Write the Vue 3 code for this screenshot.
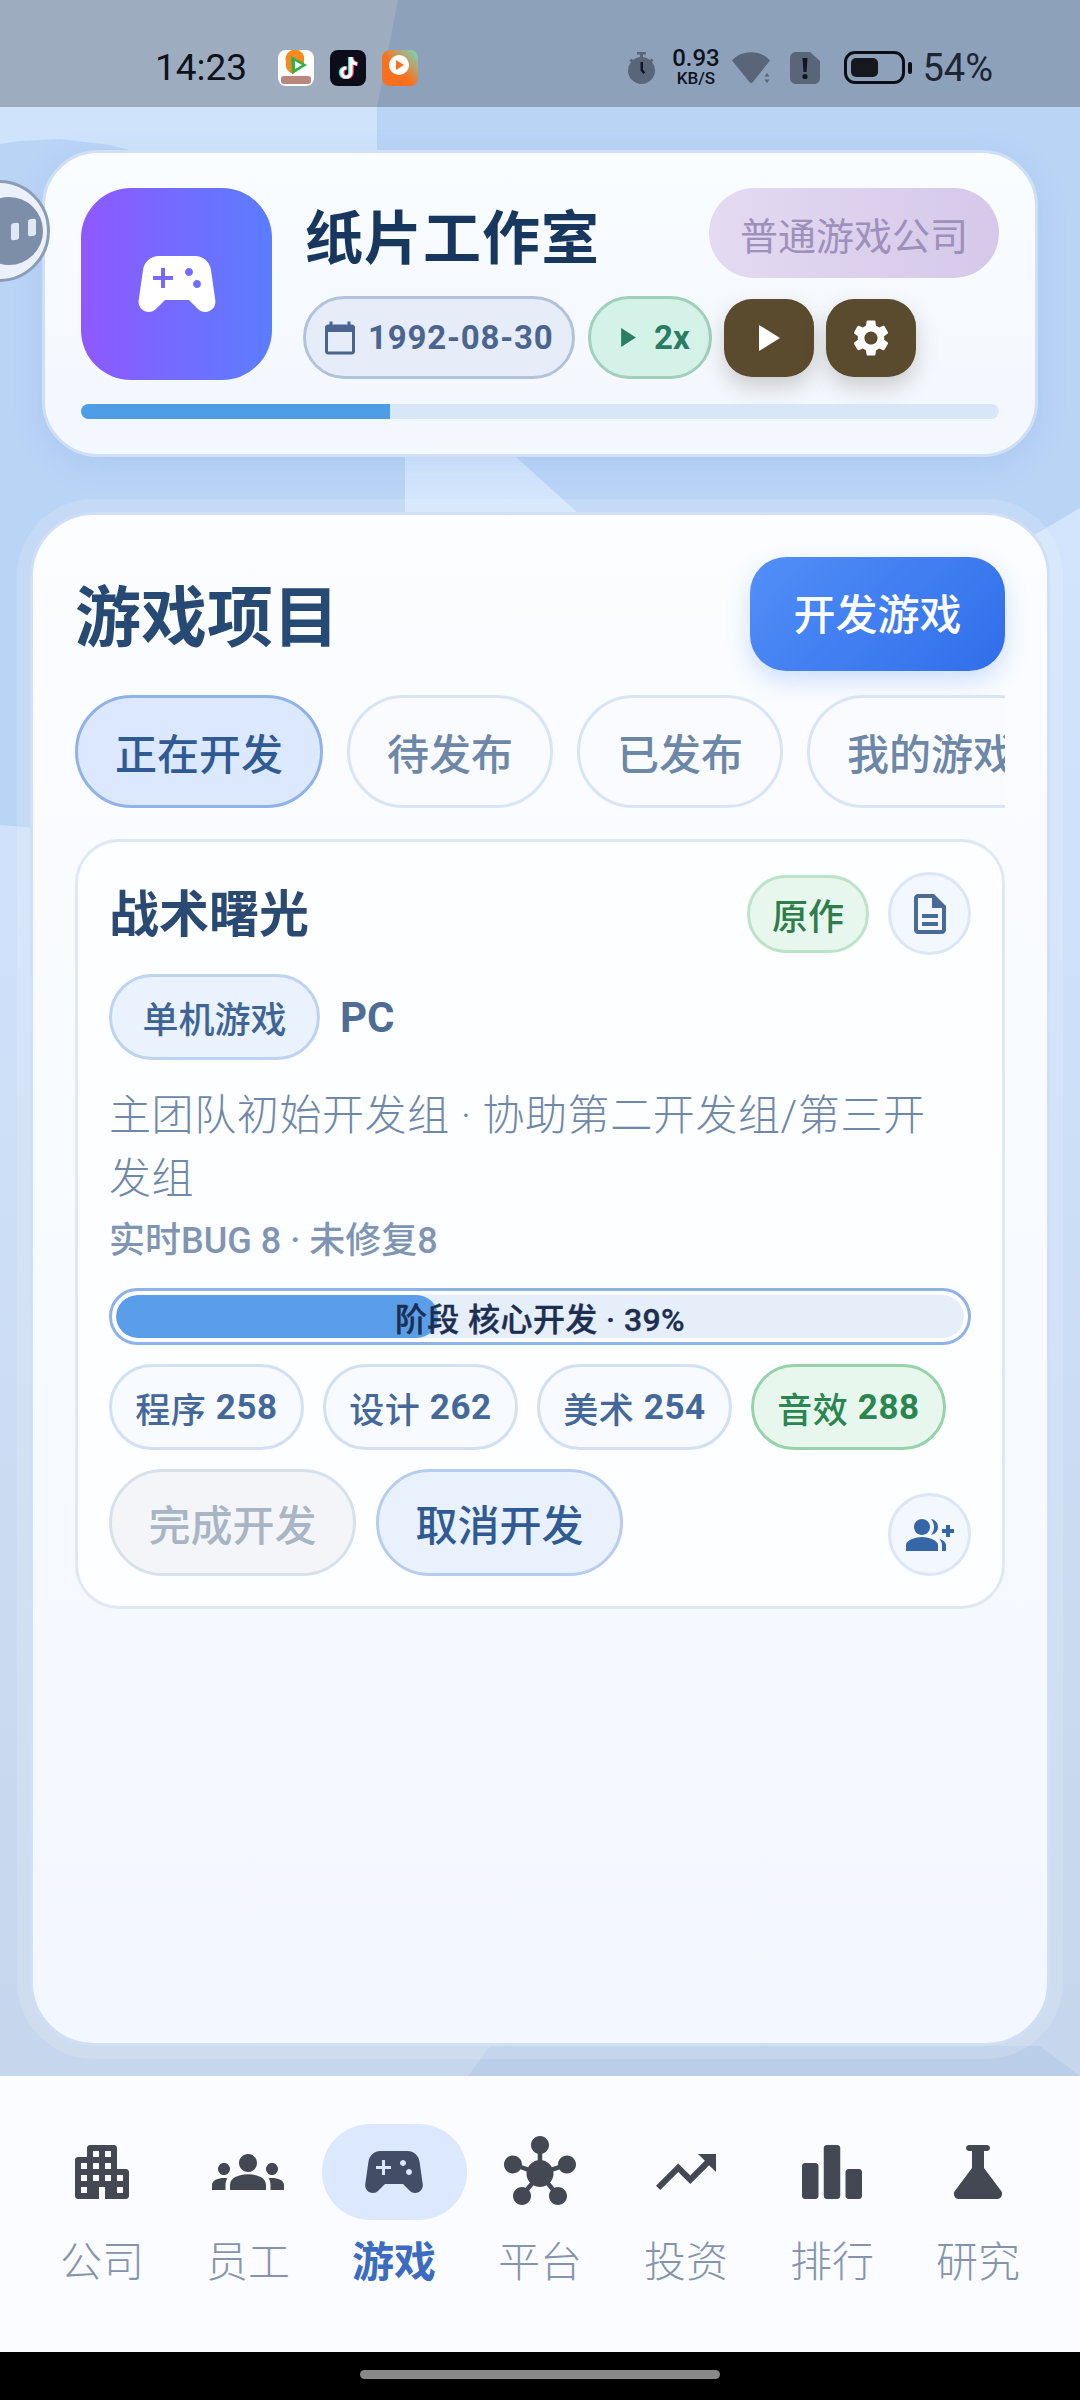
<script setup>
const tabs = ['待发布', '已发布', '我的游戏']
const skills = [
  { name: '程序', value: 258 },
  { name: '设计', value: 262 },
  { name: '美术', value: 254 },
  { name: '音效', value: 288, hot: true }
]
const gamepad = 'M21.58 16.09l-1.09-7.66C20.21 6.46 18.52 5 16.53 5H7.47C5.48 5 3.79 6.46 3.51 8.43l-1.09 7.66C2.2 17.63 3.39 19 4.94 19c.68 0 1.32-.27 1.8-.75L9 16h6l2.25 2.25c.48.48 1.13.75 1.8.75 1.56 0 2.75-1.37 2.53-2.91zM11 11H9v2H8v-2H6v-1h2V8h1v2h2v1zm4-1c-.55 0-1-.45-1-1s.45-1 1-1 1 .45 1 1-.45 1-1 1zm2 3c-.55 0-1-.45-1-1s.45-1 1-1 1 .45 1 1-.45 1-1 1z'
const nav = [
  { label: '公司', d: 'M17 11V4c0-.55-.45-1-1-1H8c-.55 0-1 .45-1 1v3H4c-.55 0-1 .45-1 1v12c0 .55.45 1 1 1h7v-4h2v4h7c.55 0 1-.45 1-1v-8c0-.55-.45-1-1-1h-3zM7 19H5v-2h2v2zm0-4H5v-2h2v2zm0-4H5V9h2v2zm4 4H9v-2h2v2zm0-4H9V9h2v2zm0-4H9V5h2v2zm4 8h-2v-2h2v2zm0-4h-2V9h2v2zm0-4h-2V5h2v2zm4 12h-2v-2h2v2zm0-4h-2v-2h2v2z' },
  { label: '员工', d: 'M12 12.75c1.63 0 3.07.39 4.24.9 1.08.48 1.76 1.56 1.76 2.73V18H6v-1.61c0-1.18.68-2.26 1.76-2.73 1.17-.52 2.61-.91 4.24-.91zM4 13c1.1 0 2-.9 2-2s-.9-2-2-2-2 .9-2 2 .9 2 2 2zm1.13 1.1c-.37-.06-.74-.1-1.13-.1-.99 0-1.93.21-2.78.58C.48 14.9 0 15.62 0 16.43V18h4.5v-1.61c0-.83.23-1.61.63-2.29zM20 13c1.1 0 2-.9 2-2s-.9-2-2-2-2 .9-2 2 .9 2 2 2zm4 3.43c0-.81-.48-1.53-1.22-1.85-.85-.37-1.79-.58-2.78-.58-.39 0-.76.04-1.13.1.4.68.63 1.46.63 2.29V18H24v-1.57zM12 6c1.66 0 3 1.34 3 3s-1.34 3-3 3-3-1.34-3-3 1.34-3 3-3z' },
  { label: '游戏', d: gamepad, active: true },
  { label: '平台', d: 'M8.4 18.2c.38.5.6 1.12.6 1.8 0 1.66-1.34 3-3 3s-3-1.34-3-3 1.34-3 3-3c.44 0 .85.09 1.23.26l1.41-1.77c-.92-1.03-1.29-2.39-1.09-3.69l-2.03-.68c-.54.83-1.46 1.38-2.52 1.38-1.66 0-3-1.34-3-3s1.34-3 3-3 3 1.34 3 3c0 .07 0 .14-.01.21l2.03.68c.64-1.21 1.82-2.09 3.22-2.32V5.91C9.96 5.58 9 4.4 9 3c0-1.66 1.34-3 3-3s3 1.34 3 3c0 1.4-.96 2.58-2.25 2.91v2.16c1.4.23 2.58 1.11 3.22 2.32l2.03-.68C18 9.64 18 9.57 18 9.5c0-1.66 1.34-3 3-3s3 1.34 3 3-1.34 3-3 3c-1.06 0-1.98-.55-2.52-1.37l-2.03.68c.2 1.29-.16 2.65-1.09 3.69l1.41 1.77C17.15 17.09 17.56 17 18 17c1.66 0 3 1.34 3 3s-1.34 3-3 3-3-1.34-3-3c0-.68.22-1.3.6-1.8l-1.41-1.77c-1.35.75-3.01.76-4.38 0L8.4 18.2z' },
  { label: '投资', d: 'M16 6l2.29 2.29-4.88 4.88-4-4L2 16.59 3.41 18l6-6 4 4 6.3-6.29L22 12V6z' },
  { label: '排行', d: 'M3 9h3.5c.55 0 1 .45 1 1v10c0 .55-.45 1-1 1H3c-.55 0-1-.45-1-1V10c0-.55.45-1 1-1zm7.25-6h3.5c.55 0 1 .45 1 1v16c0 .55-.45 1-1 1h-3.5c-.55 0-1-.45-1-1V4c0-.55.45-1 1-1zM17.5 11H21c.55 0 1 .45 1 1v8c0 .55-.45 1-1 1h-3.5c-.55 0-1-.45-1-1v-8c0-.55.45-1 1-1z' },
  { label: '研究', d: 'M9 3h6c.55 0 1 .45 1 1s-.45 1-1 1h-1v5.67L19.8 18.4c.6.9-.02 2.6-1.3 2.6h-13c-1.28 0-1.9-1.7-1.3-2.6L10 10.67V5H9c-.55 0-1-.45-1-1s.45-1 1-1z' }
]
</script>

<template>
  <div class="page">
    <div class="bg">
      <div class="shape shape-top"></div>
      <div class="shape shape-low"></div>
      <div class="shape shape-foot"></div>
    </div>

    <div class="bubble"><span class="bubble-core"><i></i><i></i></span></div>

    <header class="status">
      <div class="status-left">
        <span class="time">14:23</span>
        <div class="notes">
          <svg class="note" viewBox="0 0 36 36">
            <rect width="36" height="36" rx="8" fill="#fff" />
            <path d="M8 12 A9 9 0 0 1 26 6 L26 16 L15 24 A10 10 0 0 1 8 12z" fill="#f58a1f" />
            <path d="M13 6 L29 15 L14 24z" fill="#2fb24a" />
            <path d="M17 11 L24 15 L17 19z" fill="#fff" />
            <rect x="3" y="26" width="30" height="8" rx="3" fill="#b9877e" />
          </svg>
          <svg class="note" viewBox="0 0 36 36">
            <rect width="36" height="36" rx="8" fill="#0b0d18" />
            <path d="M20 7v15.5a4.6 4.6 0 1 1-4.6-4.6" fill="none" stroke="#27e6e0" stroke-width="4" />
            <path d="M22 7v15.5a4.6 4.6 0 1 1-4.6-4.6M22 8c.5 3.5 3 5.6 6 6" fill="none" stroke="#f0304f" stroke-width="4" />
            <path d="M21 7v15.5a4.6 4.6 0 1 1-4.6-4.6M21 8c.5 3.5 3 5.6 6 6" fill="none" stroke="#fff" stroke-width="3.4" />
          </svg>
          <svg class="note" viewBox="0 0 36 36">
            <defs>
              <linearGradient id="noteGrad" x1="0" y1="1" x2="1" y2="0">
                <stop offset="0.45" stop-color="#f9701f" />
                <stop offset="1" stop-color="#6fdcc0" />
              </linearGradient>
            </defs>
            <rect width="36" height="36" rx="8" fill="url(#noteGrad)" />
            <circle cx="17" cy="15" r="10" fill="#fff" />
            <path d="M14 10l8 5-8 5z" fill="#f9701f" />
          </svg>
        </div>
      </div>
      <div class="status-right">
        <svg class="sys timer" viewBox="0 0 29 32">
          <path d="M10 0h9v2.500h-3V5a13 13 0 0 1 7 3l1.500-1.500 2 2L25 10a13.500 13.500 0 1 1-21 0L2.500 8.500l2-2L6 8a13 13 0 0 1 7-3V2.500h-3z" fill="#596679" />
          <path d="M13.500 10v8.500l3 3.500 1.800-1.600-2.300-3V10z" fill="#101621" />
        </svg>
        <div class="speed"><b>0.93</b><span>KB/S</span></div>
        <svg class="sys wifi" viewBox="0 0 39 32">
          <path d="M0 8.500C9 -2.500 29 -2.500 38 8.500L21 30c-1 1.500-2.500 1.500-3.500 0z" fill="#596679" />
          <path d="M35 21l2.500 3.500h-5zM35 31l-2.500-3.500h5z" fill="#596679" />
        </svg>
        <svg class="sys sim" viewBox="0 0 30 32">
          <path d="M6 0h14l10 9v17c0 3.500-2.500 6-6 6H6c-3.500 0-6-2.500-6-6V6c0-3.500 2.500-6 6-6z" fill="#596679" />
          <path d="M12.500 6h5l-1 14h-3z" fill="#101621" />
          <circle cx="15" cy="24.500" r="2.600" fill="#101621" />
        </svg>
        <div class="battery"><span class="batt-body"><span class="batt-fill"></span></span><span class="batt-nub"></span></div>
        <span class="percent">54%</span>
      </div>
    </header>

    <main class="content">
      <section class="studio">
        <div class="studio-top">
          <div class="logo">
            <svg viewBox="0 0 24 24" class="logo-icon"><path :d="gamepad" /></svg>
          </div>
          <div class="studio-info">
            <div class="title-row">
              <h1 class="studio-name">纸片工作室</h1>
              <span class="rank">普通游戏公司</span>
            </div>
            <div class="chips">
              <span class="chip date">
                <svg viewBox="0 0 24 24"><path d="M20 3h-1V1h-2v2H7V1H5v2H4c-1.100 0-2 .9-2 2v16c0 1.100.9 2 2 2h16c1.100 0 2-.9 2-2V5c0-1.100-.9-2-2-2zm0 18H4V8h16v13z" /></svg>
                1992-08-30
              </span>
              <span class="chip rate">
                <svg viewBox="0 0 14 18"><path d="M0 0l14 9-14 9z" /></svg>
                2x
              </span>
              <button class="square">
                <svg class="play" viewBox="0 0 21 26"><path d="M0 0l21 13L0 26z" /></svg>
              </button>
              <button class="square">
                <svg class="gear" viewBox="0 0 24 24"><path d="M19.140 12.940c.04-.3.06-.61.06-.94 0-.32-.02-.64-.07-.94l2.030-1.580c.18-.14.23-.41.12-.61l-1.920-3.320c-.12-.22-.37-.29-.59-.22l-2.390.96c-.5-.38-1.030-.7-1.620-.94l-.36-2.540c-.04-.24-.24-.41-.48-.41h-3.840c-.24 0-.43.17-.47.41l-.36 2.540c-.59.24-1.130.57-1.620.94l-2.390-.96c-.22-.08-.47 0-.59.22L2.740 8.870c-.12.21-.08.47.12.61l2.030 1.580c-.05.3-.09.63-.09.94s.02.64.07.94l-2.030 1.580c-.18.14-.23.41-.12.61l1.920 3.320c.12.22.37.29.59.22l2.390-.96c.5.38 1.030.7 1.620.94l.36 2.540c.05.24.24.41.48.41h3.840c.24 0 .44-.17.47-.41l.36-2.540c.59-.24 1.130-.56 1.620-.94l2.390.96c.22.08.47 0 .59-.22l1.920-3.320c.12-.22.07-.47-.12-.61l-2.010-1.580zM12 15.600c-1.980 0-3.600-1.620-3.600-3.600s1.620-3.600 3.600-3.600 3.600 1.620 3.600 3.600-1.620 3.600-3.600 3.600z" /></svg>
              </button>
            </div>
          </div>
        </div>
        <div class="year-track"><div class="year-fill"></div></div>
      </section>

      <section class="projects">
        <div class="projects-head">
          <h2 class="projects-title">游戏项目</h2>
          <button class="develop">开发游戏</button>
        </div>

        <div class="tabs">
          <span class="tab active">正在开发</span>
          <span v-for="t in tabs" :key="t" class="tab">{{ t }}</span>
        </div>

        <article class="game">
          <div class="game-head">
            <h3 class="game-name">战术曙光</h3>
            <span class="origin">原作</span>
            <button class="round">
              <svg class="doc" viewBox="0 0 24 24"><path d="M8 16h8v2H8zm0-4h8v2H8zm6-10H6c-1.100 0-2 .9-2 2v16c0 1.100.89 2 1.990 2H18c1.100 0 2-.9 2-2V8l-6-6zm4 18H6V4h7v5h5v11z" /></svg>
            </button>
          </div>

          <div class="game-tags">
            <span class="type">单机游戏</span>
            <span class="platform">PC</span>
          </div>

          <p class="teams">主团队初始开发组 · 协助第二开发组/第三开发组</p>
          <p class="bugs">实时BUG 8 · 未修复8</p>

          <div class="stage">
            <div class="stage-track">
              <div class="stage-fill"></div>
              <span class="stage-text">阶段 核心开发 · 39%</span>
            </div>
          </div>

          <div class="skills">
            <span v-for="s in skills" :key="s.name" class="skill" :class="{ hot: s.hot }">{{ s.name }}&nbsp;<b>{{ s.value }}</b></span>
          </div>

          <div class="actions">
            <button class="action off">完成开发</button>
            <button class="action on">取消开发</button>
            <button class="round push">
              <svg class="add" viewBox="0 0 24 24"><path d="M22 9V7h-2v2h-2v2h2v2h2v-2h2V9zM8 12c2.210 0 4-1.790 4-4s-1.790-4-4-4-4 1.790-4 4 1.790 4 4 4zm0 1c-2.670 0-8 1.340-8 4v3h16v-3c0-2.660-5.330-4-8-4zm4.510-8.950C13.430 5.110 14 6.490 14 8s-.57 2.890-1.490 3.950C14.470 11.700 16 10.040 16 8s-1.530-3.700-3.490-3.950zm4.020 9.780C17.420 14.660 18 15.700 18 17v3h2v-3c0-1.450-1.590-2.510-3.470-3.170z" /></svg>
            </button>
          </div>
        </article>
      </section>
    </main>

    <nav class="nav">
      <div v-for="n in nav" :key="n.label" class="nav-item" :class="{ active: n.active }">
        <span class="nav-icon"><svg viewBox="0 0 24 24"><path :d="n.d" /></svg></span>
        <span class="nav-label">{{ n.label }}</span>
      </div>
    </nav>

    <footer class="home"><span class="home-bar"></span></footer>
  </div>
</template>

<style>
html, body { margin: 0; background: #000; }
</style>

<style scoped>
* { box-sizing: border-box; }
.page {
  position: relative;
  width: 1080px;
  height: 2400px;
  overflow: hidden;
  display: flex;
  flex-direction: column;
  font-family: Roboto, "Noto Sans CJK SC", sans-serif;
}
h1, h2, h3, p { margin: 0; }
button { font-family: inherit; padding: 0; margin: 0; cursor: pointer; }

.bg {
  position: absolute;
  inset: 0;
  background: #bad4f6;
}
.shape { position: absolute; inset: 0; }
.shape-top {
  background: #cfe3fb;
  clip-path: polygon(0 0, 398px 0, 377px 107px, 377px 150px, 130px 150px, 110px 145px, 60px 139px, 20px 141px, 0 144px);
}
.shape-low {
  background: linear-gradient(180deg, #d3e5fc 500px, #cfe1fa 900px, #c6d6ec 2076px);
  clip-path: polygon(0 825px, 115px 835px, 405px 515px, 405px 456px, 515px 456px, 580px 515px, 1036px 534px, 1080px 508px, 1080px 2100px, 0 2100px);
}
.shape-foot {
  background: rgba(165, 192, 230, .35);
  clip-path: polygon(468px 2076px, 490px 2046px, 1040px 2046px, 1080px 2076px);
}

.bubble {
  position: absolute;
  z-index: 3;
  left: -52px; top: 180px;
  width: 102px; height: 102px;
  border-radius: 50%;
  background: #eaf1fb;
  border: 3px solid #8c9cb5;
  display: flex;
  align-items: center;
  justify-content: flex-end;
  padding-right: 4px;
}
.bubble-core {
  width: 68px; height: 68px;
  border-radius: 50%;
  background: #7d8ea8;
  display: flex;
  align-items: center;
  justify-content: center;
  gap: 9px;
  padding-left: 28px;
}
.bubble-core i {
  width: 8px; height: 17px;
  border-radius: 2px;
  background: #dfe8f4;
  transform: skewY(-8deg);
}
.bubble-core i + i { margin-top: -7px; }

.status {
  position: relative;
  z-index: 2;
  height: 107px;
  flex: none;
  background: rgba(0, 0, 0, .24);
  display: flex;
  align-items: center;
  justify-content: space-between;
  padding: 28px 87px 0 155px;
  color: #0e131b;
}
.status-left { display: flex; align-items: center; gap: 30px; }
.time { font-size: 37px; line-height: 36px; width: 93px; white-space: nowrap; }
.notes { display: flex; gap: 16px; }
.note { width: 36px; height: 36px; display: block; }
.status-right { display: flex; align-items: center; }
.sys { display: block; height: 32px; }
.timer { width: 29px; }
.speed {
  width: 47px;
  margin-left: 16px;
  display: flex;
  flex-direction: column;
  align-items: center;
  white-space: nowrap;
}
.speed b { font-size: 24px; line-height: 21px; font-weight: 500; }
.speed span { font-size: 17px; line-height: 19px; font-weight: 500; }
.wifi { width: 39px; margin-left: 13px; }
.sim { width: 30px; margin-left: 19px; }
.battery { display: flex; align-items: center; margin-left: 24px; }
.batt-body {
  width: 61px; height: 33px;
  border: 3px solid #0b0f14;
  border-radius: 11px;
  padding: 4px;
  display: block;
}
.batt-fill {
  display: block;
  width: 27px; height: 19px;
  border-radius: 5px;
  background: #15191e;
}
.batt-nub { width: 4px; height: 12px; margin-left: 3px; border-radius: 2px; background: #0b0f14; }
.percent { font-size: 38px; line-height: 38px; margin-left: 10px; color: #1d2633; }

.content { position: relative; z-index: 1; flex: 1; min-height: 0; display: flex; flex-direction: column; }

.studio {
  margin: 43px 42px 0;
  height: 307px;
  flex: none;
  border-radius: 56px;
  background: linear-gradient(180deg, #f9fdff 0%, #f3f7fe 100%);
  border: 3px solid #cfdff5;
  box-shadow: 0 8px 30px rgba(100, 145, 215, .16);
  padding: 35px 36px 0;
}
.studio-top { display: flex; gap: 33px; }
.logo {
  width: 191px; height: 192px;
  flex: none;
  border-radius: 50px;
  background: linear-gradient(90deg, #8f58ff 0%, #5a7dff 100%);
  display: flex;
  align-items: center;
  justify-content: center;
}
.logo-icon { width: 96px; height: 96px; fill: #fff; display: block; }
.studio-info { flex: 1; min-width: 0; }
.title-row { display: flex; align-items: center; justify-content: space-between; height: 90px; }
.studio-name {
  font-size: 58px;
  line-height: 90px;
  padding-top: 12px;
  letter-spacing: 1px;
  font-weight: 700;
  color: #17375e;
}
.rank {
  width: 290px; height: 90px;
  border-radius: 45px;
  background: linear-gradient(90deg, #e4daf1, #d5c8ea);
  color: #9d90bb;
  font-size: 38px;
  display: flex;
  align-items: center;
  justify-content: center;
}
.chips { display: flex; align-items: center; margin: 18px 0 0 -2px; gap: 12px; }
.chip {
  height: 83px;
  border-radius: 42px;
  border: 3px solid;
  display: inline-flex;
  align-items: center;
  font-weight: 700;
  font-size: 33px;
  white-space: nowrap;
}
.date {
  width: 272px;
  background: #e6edf8;
  border-color: #b2c2da;
  color: #4b6590;
  letter-spacing: .8px;
  padding-left: 19px;
  gap: 10px;
}
.date svg { width: 36px; height: 36px; fill: #4b6590; flex: none; margin-left: -3px; }
.rate {
  width: 124px;
  margin-left: 1px;
  background: #d5f2e8;
  border-color: #a0cfba;
  color: #2a7d63;
  padding-left: 30px;
  gap: 18px;
}
.rate svg { width: 15px; height: 19px; fill: #2a7d63; }
.square {
  width: 90px; height: 78px;
  border: 0;
  border-radius: 28px;
  background: #5a4a2e;
  box-shadow: 0 10px 22px rgba(60, 50, 30, .22);
  display: flex;
  align-items: center;
  justify-content: center;
}
.play { width: 21px; height: 26px; fill: #fff; display: block; }
.gear { width: 44px; height: 44px; fill: #fff; display: block; }
.year-track {
  height: 15px;
  margin-top: 24px;
  border-radius: 8px;
  background: #d8e7f8;
  overflow: hidden;
}
.year-fill { width: 33.700%; height: 100%; background: #4c9ce6; }

.projects {
  margin: 55px 30px 30px;
  flex: 1;
  min-height: 0;
  border-radius: 64px;
  background: linear-gradient(180deg, #fbfdff 0%, #f3f7ff 100%);
  border: 3px solid #cfdff5;
  box-shadow: 0 0 0 13px rgba(255, 255, 255, .15);
  padding: 42px 42px 0;
}
.projects-head { display: flex; align-items: center; justify-content: space-between; height: 114px; }
.projects-title { font-size: 66px; line-height: 76px; padding-top: 9px; font-weight: 700; color: #274a75; }
.develop {
  width: 255px; height: 114px;
  border: 0;
  border-radius: 36px;
  background: linear-gradient(135deg, #528ff8, #2f6eea);
  color: #fff;
  font-size: 42px;
  font-weight: 500;
  padding-bottom: 6px;
  box-shadow: 0 10px 24px rgba(70, 130, 235, .24);
}
.tabs { display: flex; gap: 24px; margin-top: 24px; overflow: hidden; }
.tab {
  flex: none;
  height: 113px;
  padding: 0 37px;
  border-radius: 57px;
  border: 3px solid #d9e5f6;
  background: #f9fbff;
  font-size: 42px;
  font-weight: 500;
  color: #6d87a9;
  display: flex;
  align-items: center;
}
.tab.active { background: #dbe8fd; border-color: #8fb2e8; color: #2f5a94; }

.game {
  margin-top: 31px;
  border-radius: 44px;
  border: 3px solid #dfe9f6;
  background: #fdfeff;
  padding: 30px 31px;
}
.game-head { display: flex; align-items: center; height: 83px; }
.game-name { flex: 1; font-size: 50px; line-height: 60px; padding-top: 3px; font-weight: 700; color: #2a4a72; }
.origin {
  height: 78px; width: 122px;
  border-radius: 39px;
  border: 3px solid #bce2c8;
  background: #e8f7ed;
  color: #2e7d4a;
  font-size: 36px;
  font-weight: 500;
  display: flex;
  align-items: center;
  justify-content: center;
  margin-right: 19px;
}
.round {
  width: 83px; height: 83px;
  flex: none;
  border-radius: 50%;
  border: 3px solid #dbe6f6;
  background: #f3f7fe;
  display: flex;
  align-items: center;
  justify-content: center;
}
.doc { width: 48px; height: 48px; fill: #4a6a98; display: block; }
.game-tags { display: flex; align-items: center; gap: 20px; margin-top: 19px; }
.type {
  height: 86px;
  width: 211px;
  border-radius: 43px;
  border: 3px solid #bed3f1;
  background: #eaf2fe;
  color: #3f6496;
  font-size: 36px;
  font-weight: 500;
  display: flex;
  align-items: center;
  justify-content: center;
}
.platform { font-size: 42px; line-height: 50px; padding-top: 2px; font-weight: 700; color: #4d6c96; }
.teams { margin-top: 24px; padding-right: 20px; font-size: 42px; line-height: 63px; color: #6f88aa; letter-spacing: .6px; font-weight: 300; }
.bugs { margin-top: 7px; font-size: 36px; line-height: 48px; font-weight: 500; color: #7f95b3; }
.stage {
  margin-top: 23px;
  height: 57px;
  border-radius: 29px;
  border: 3px solid #8fb2e8;
  background: #fff;
  padding: 4px;
}
.stage-track {
  position: relative;
  height: 100%;
  border-radius: 22px;
  background: #e6eefa;
  overflow: hidden;
  display: flex;
  align-items: center;
  justify-content: center;
}
.stage-fill {
  position: absolute;
  left: 0; top: 0; bottom: 0;
  width: 38%;
  border-radius: 22px;
  background: #5a9eea;
}
.stage-text {
  position: relative;
  font-size: 32px;
  font-weight: 500;
  letter-spacing: .4px;
  color: #1c2f52;
  -webkit-text-stroke: .4px #1c2f52;
}
.skills { display: flex; gap: 19px; margin-top: 19px; }
.skill {
  width: 195px; height: 86px;
  border-radius: 43px;
  border: 3px solid #d3e0f4;
  background: #f7faff;
  color: #44689a;
  font-size: 35px;
  font-weight: 500;
  letter-spacing: .6px;
  display: flex;
  align-items: center;
  justify-content: center;
}
.skill b { font-weight: 700; }
.skill.hot { background: #e8f7ed; border-color: #97d3aa; color: #2a8650; }
.actions { display: flex; align-items: flex-end; gap: 20px; margin-top: 19px; }
.action {
  width: 247px; height: 107px;
  border-radius: 54px;
  border: 3px solid;
  font-size: 42px;
  font-weight: 500;
}
.off { background: #f3f5f9; border-color: #d8e0ea; color: #a9b5c4; }
.on { background: #e9f1fd; border-color: #b6cdf0; color: #2f5a94; }
.push { margin-left: auto; }
.add { width: 48px; height: 48px; fill: #3566a8; display: block; }

.nav {
  position: relative;
  z-index: 1;
  height: 276px;
  flex: none;
  background: #fbfcff;
  display: grid;
  grid-template-columns: repeat(7, 1fr);
  padding: 48px 29px 0;
}
.nav-item { display: flex; flex-direction: column; align-items: center; }
.nav-icon {
  width: 145px; height: 96px;
  border-radius: 48px;
  display: flex;
  align-items: center;
  justify-content: center;
}
.nav-icon svg { width: 72px; height: 72px; fill: #444852; display: block; }
.nav-label { margin-top: 19px; font-size: 42px; line-height: 48px; color: #8594ad; font-weight: 300; }
.nav-item.active .nav-icon { background: #dbe8fd; }
.nav-item.active .nav-icon svg { fill: #434d66; }
.nav-item.active .nav-label { color: #3c6cbf; font-weight: 700; }

.home {
  position: relative;
  z-index: 1;
  height: 48px;
  flex: none;
  background: #000;
  display: flex;
  justify-content: center;
  padding-top: 18px;
}
.home-bar { width: 360px; height: 9px; border-radius: 5px; background: #888; }
</style>
